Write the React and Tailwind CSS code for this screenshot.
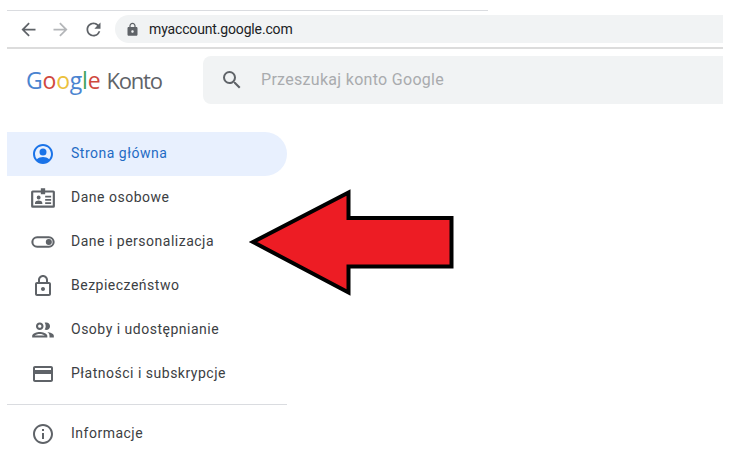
const GRAY = "#5f6368";

function Icon({ size = 24, color = GRAY, d, className }) {
  return (
    <svg width={size} height={size} viewBox="0 0 24 24" fill={color} className={className}>
      <path d={d} />
    </svg>
  );
}

const paths = {
  back: "M20 11H7.830l5.590-5.590L12 4l-8 8 8 8 1.410-1.410L7.830 13H20v-2z",
  forward: "M4 11h12.170l-5.590-5.590L12 4l8 8-8 8-1.410-1.410L16.170 13H4v-2z",
  reload:
    "M17.650 6.350A7.958 7.958 0 0 0 12 4c-4.420 0-7.990 3.580-7.990 8s3.570 8 7.990 8c3.730 0 6.840-2.550 7.730-6h-2.080A5.990 5.990 0 0 1 12 18c-3.310 0-6-2.690-6-6s2.690-6 6-6c1.660 0 3.140.69 4.220 1.780L13 11h7V4l-2.350 2.350z",
  search:
    "M15.500 14h-.79l-.28-.27A6.471 6.471 0 0 0 16 9.500 6.500 6.500 0 1 0 9.500 16c1.610 0 3.090-.59 4.230-1.570l.27.28v.79l5 4.990L20.490 19l-4.990-5zm-6 0C7.010 14 5 11.990 5 9.500S7.010 5 9.500 5 14 7.010 14 9.500 11.990 14 9.500 14z",
  padlock:
    "M18 8h-1V6c0-2.760-2.240-5-5-5S7 3.240 7 6v2H6c-1.100 0-2 .9-2 2v10c0 1.100.9 2 2 2h12c1.100 0 2-.9 2-2V10c0-1.100-.9-2-2-2zM9 6c0-1.660 1.340-3 3-3s3 1.340 3 3v2H9V6zm3 11c-1.100 0-2-.9-2-2s.9-2 2-2 2 .9 2 2-.9 2-2 2z",
  home:
    "M12 2C6.480 2 2 6.480 2 12s4.480 10 10 10 10-4.480 10-10S17.520 2 12 2zm0 2c4.420 0 8 3.580 8 8 0 1.950-.7 3.740-1.860 5.130C16.600 15.700 14.300 15 12 15s-4.600.7-6.140 2.130A7.960 7.960 0 0 1 4 12c0-4.420 3.580-8 8-8zm0 2.500a3.500 3.500 0 1 0 0 7 3.500 3.500 0 0 0 0-7z",
  card:
    "M2.500 5H10V3h4v2h7.500A1.500 1.500 0 0 1 23 6.500v13a1.500 1.500 0 0 1-1.500 1.500h-19A1.500 1.500 0 0 1 1 19.500v-13A1.500 1.500 0 0 1 2.500 5zm.5 2v12h18V7h-7v1.500h-4V7H3zm5 2.700a1.800 1.800 0 1 1 0 3.600 1.800 1.800 0 0 1 0-3.600zM4.600 17.500v-1c0-1.300 2.300-2.100 3.400-2.100s3.400.8 3.400 2.100v1H4.600zM14 10h5.500v1.500H14V10zm0 3h5.500v1.500H14V13zm0 3h5.500v1.500H14V16z",
  toggle:
    "M7 7h10a5 5 0 0 1 0 10H7A5 5 0 0 1 7 7zm0 1.800a3.200 3.200 0 0 0 0 6.400h10a3.200 3.200 0 0 0 0-6.400H7zm10 .6a2.600 2.600 0 1 1 0 5.200 2.600 2.600 0 0 1 0-5.200z",
  lockOutline:
    "M18 8h-1V6c0-2.760-2.240-5-5-5S7 3.240 7 6v2H6c-1.100 0-2 .9-2 2v10c0 1.100.9 2 2 2h12c1.100 0 2-.9 2-2V10c0-1.100-.9-2-2-2zM9 6c0-1.660 1.340-3 3-3s3 1.340 3 3v2H9V6zm9 14H6V10h12v10zm-6-3c1.100 0 2-.9 2-2s-.9-2-2-2-2 .9-2 2 .9 2 2 2z",
  people:
    "M9 13.750c-2.340 0-7 1.170-7 3.500V19h14v-1.750c0-2.330-4.660-3.500-7-3.500zM4.340 17c.84-.58 2.870-1.250 4.660-1.250s3.820.67 4.660 1.250H4.340zM9 12c1.930 0 3.500-1.570 3.500-3.500S10.930 5 9 5 5.500 6.570 5.500 8.500 7.070 12 9 12zm0-5c.83 0 1.500.67 1.500 1.500S9.830 10 9 10s-1.500-.67-1.500-1.500S8.170 7 9 7zm7.040 6.810c1.160.84 1.960 1.960 1.960 3.440V19h4v-1.750c0-2.020-3.500-3.170-5.960-3.440zM15 12c1.930 0 3.500-1.570 3.500-3.500S16.930 5 15 5c-.54 0-1.040.13-1.500.35.63.89 1 1.980 1 3.150s-.37 2.260-1 3.150c.46.22.96.35 1.500.35z",
  payment:
    "M20 4H4c-1.110 0-2 .89-2 2v12c0 1.110.89 2 2 2h16c1.110 0 2-.89 2-2V6c0-1.110-.89-2-2-2zm0 14H4v-6h16v6zm0-10H4V6h16v2z",
  info:
    "M11 7h2v2h-2V7zm0 4h2v6h-2v-6zm1-9C6.480 2 2 6.480 2 12s4.480 10 10 10 10-4.480 10-10S17.520 2 12 2zm0 18c-4.410 0-8-3.590-8-8s3.590-8 8-8 8 3.590 8 8-3.590 8-8 8z",
};

function NavItem({ icon, size, label, active }) {
  return (
    <div
      className={`flex h-11 w-[280px] items-center rounded-r-full ${
        active ? "bg-[#e8f0fe] text-[#1f6bc4]" : "text-[#3c4043]"
      }`}
    >
      <div className="flex w-[64px] shrink-0 items-center justify-center pl-[8px]">
        <Icon d={icon} size={size} color={active ? "#1a73e8" : GRAY} />
      </div>
      <span className="pb-[2px] text-[14px] tracking-[0.5px]">{label}</span>
    </div>
  );
}

export default function App() {
  return (
    <div className="relative h-[468px] w-[734px] overflow-hidden bg-white font-['Roboto',sans-serif]">
      <div className="pl-[7px] pt-[10px]">
        <div className="h-px w-[481px] bg-[#dadce0]" />

        {/* browser toolbar */}
        <div className="flex h-[38px] w-[716px] items-center border-b-2 border-[#dcdcdc]">
          <Icon d={paths.back} size={21} className="ml-[11px]" />
          <Icon d={paths.forward} size={21} color="#b4b6b9" className="ml-[11px]" />
          <Icon d={paths.reload} size={21} className="ml-[12px]" />
          <div className="ml-[11px] flex h-[28px] flex-1 items-center rounded-l-full bg-[#f1f3f4] pl-[10px]">
            <Icon d={paths.padlock} size={15} />
            <span className="ml-[9px] text-[14px] tracking-[-0.15px] text-[#202124]">myaccount.google.com</span>
          </div>
        </div>

        {/* header */}
        <div className="mt-[7px] flex h-[48px] w-[716px] items-center">
          <div className="flex w-[196px] items-center pl-[19px] font-['Open_Sans',sans-serif]">
            <span className="text-[23px] tracking-[-0.2px]">
              <span className="text-[#4a84d0]">G</span>
              <span className="text-[#d0493e]">o</span>
              <span className="text-[#ecc13c]">o</span>
              <span className="text-[#4a84d0]">g</span>
              <span className="text-[#3fa45a]">l</span>
              <span className="text-[#d0493e]">e</span>
            </span>
            <span className="ml-[6px] text-[22px] tracking-[-1.2px] text-[#5f6368]">Konto</span>
          </div>
          <div className="flex h-[48px] flex-1 items-center rounded-l-lg bg-[#f1f3f4]">
            <Icon d={paths.search} size={24} className="ml-[17px]" />
            <span className="ml-[17px] text-[16px] tracking-[0.3px] text-[#a9abae]">Przeszukaj konto Google</span>
          </div>
        </div>

        {/* side nav */}
        <div className="mt-[28px]">
          <NavItem icon={paths.home} size={24} label="Strona główna" active />
          <NavItem icon={paths.card} size={26} label="Dane osobowe" />
          <NavItem icon={paths.toggle} size={28} label="Dane i personalizacja" />
          <NavItem icon={paths.lockOutline} size={24} label="Bezpieczeństwo" />
          <NavItem icon={paths.people} size={26} label="Osoby i udostępnianie" />
          <NavItem icon={paths.payment} size={24} label="Płatności i subskrypcje" />
          <div className="mt-[8px] mb-[7px] h-px w-[280px] bg-[#dadce0]" />
          <NavItem icon={paths.info} size={24} label="Informacje" />
        </div>
      </div>

      {/* red arrow over the page */}
      <svg className="absolute left-[240px] top-[180px]" width="230" height="125" viewBox="240 180 230 125">
        <polygon
          points="253,242 348.500,192.500 348.500,218 451.500,218 451.500,266.500 348.500,266.500 348.500,292.500"
          fill="#ed1c24"
          stroke="#000"
          strokeWidth="4"
        />
      </svg>
    </div>
  );
}
